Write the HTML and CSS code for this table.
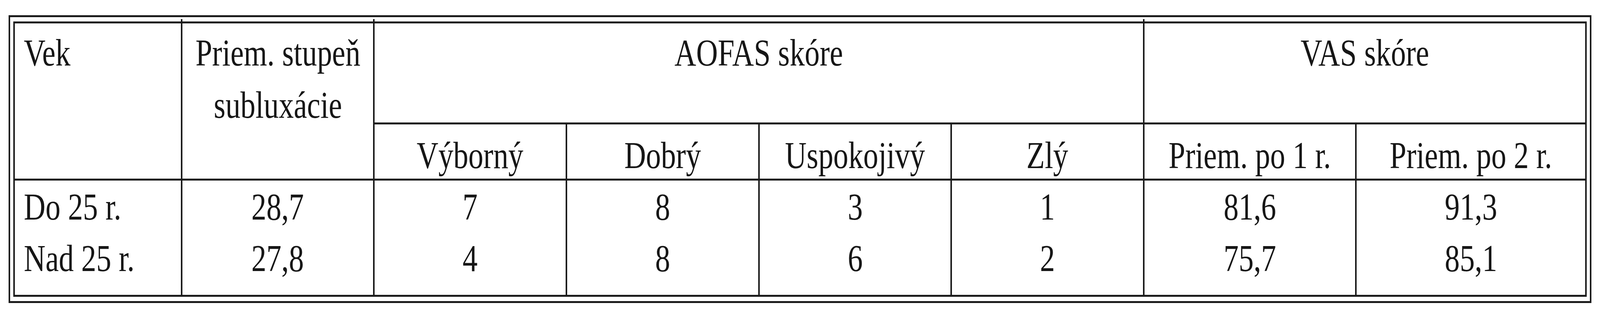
FILE: index.html
```html
<!DOCTYPE html>
<html lang="sk">
<head>
<meta charset="utf-8">
<title>Tabuľka</title>
<link rel="stylesheet" href="styles.css">
</head>
<body>
<div class="frame">
  <div class="grid">
    <div class="cell h1 rspan left"><span class="t">Vek</span></div>
    <div class="cell h1 rspan bl tick"><span class="t">Priem. stupeň<br>subluxácie</span></div>
    <div class="cell h1 cspan4 bl tick"><span class="t">AOFAS skóre</span></div>
    <div class="cell h1 cspan2 bl tick"><span class="t">VAS skóre</span></div>

    <div class="cell h2 bl bt"><span class="t">Výborný</span></div>
    <div class="cell h2 bl bt"><span class="t">Dobrý</span></div>
    <div class="cell h2 bl bt"><span class="t">Uspokojivý</span></div>
    <div class="cell h2 bl bt"><span class="t">Zlý</span></div>
    <div class="cell h2 bl bt"><span class="t">Priem. po 1 r.</span></div>
    <div class="cell h2 bl bt"><span class="t">Priem. po 2 r.</span></div>

    <div class="cell d1 bt left"><span class="t">Do 25 r.</span></div>
    <div class="cell d1 bt bl"><span class="t">28,7</span></div>
    <div class="cell d1 bt bl"><span class="t">7</span></div>
    <div class="cell d1 bt bl"><span class="t">8</span></div>
    <div class="cell d1 bt bl"><span class="t">3</span></div>
    <div class="cell d1 bt bl"><span class="t">1</span></div>
    <div class="cell d1 bt bl"><span class="t">81,6</span></div>
    <div class="cell d1 bt bl"><span class="t">91,3</span></div>

    <div class="cell d2 left"><span class="t">Nad 25 r.</span></div>
    <div class="cell d2 bl"><span class="t">27,8</span></div>
    <div class="cell d2 bl"><span class="t">4</span></div>
    <div class="cell d2 bl"><span class="t">8</span></div>
    <div class="cell d2 bl"><span class="t">6</span></div>
    <div class="cell d2 bl"><span class="t">2</span></div>
    <div class="cell d2 bl"><span class="t">75,7</span></div>
    <div class="cell d2 bl"><span class="t">85,1</span></div>
  </div>
</div>
</body>
</html>
```
FILE: styles.css
```css
html, body {
  margin: 0;
  padding: 0;
  background: #ffffff;
}

body {
  font-family: "Liberation Serif", "Times New Roman", serif;
  font-size: 98px;
  color: #161616;
}

/* double-ruled frame round the table */
.frame {
  width: fit-content;
  margin: 39px 0 0 22px;
  border-style: solid;
  border-color: #1c1c1c;
  border-width: 5px 4px;
  padding: 11px 8px;
}

.grid {
  display: grid;
  grid-template-columns: 425px 492px 493px 493px 492px 493px 543px 589px;
  grid-template-rows: 254px 144px 138px 160px;
  border-style: solid;
  border-color: #1c1c1c;
  border-width: 5px 4px;
}

.cell {
  display: flex;
  justify-content: center;
  align-items: flex-start;
  position: relative;
}

.left {
  justify-content: flex-start;
  padding-left: 23px;
}

/* the typeset face of the original is narrow: condense it */
.t {
  display: inline-block;
  white-space: nowrap;
  text-align: center;
  transform: scaleX(0.78317);
  transform-origin: center top;
}

.left .t {
  text-align: left;
  transform-origin: left top;
}

.bl {
  border-left: 4px solid #1c1c1c;
}

.bt {
  border-top: 5px solid #1c1c1c;
}

.rspan {
  grid-row: span 2;
}

.cspan4 {
  grid-column: span 4;
}

.cspan2 {
  grid-column: span 2;
}

.h1 {
  padding-top: 8px;
  line-height: 134px;
}

.h2 {
  padding-top: 23px;
  line-height: 112px;
}

.d1 {
  padding-top: 1px;
  line-height: 132px;
}

.d2 {
  line-height: 132px;
}

/* small ticks where the column rules poke above the inner frame line */
.tick::before {
  content: "";
  position: absolute;
  left: -4px;
  top: -11px;
  width: 4px;
  height: 6px;
  background: #1c1c1c;
}
```
